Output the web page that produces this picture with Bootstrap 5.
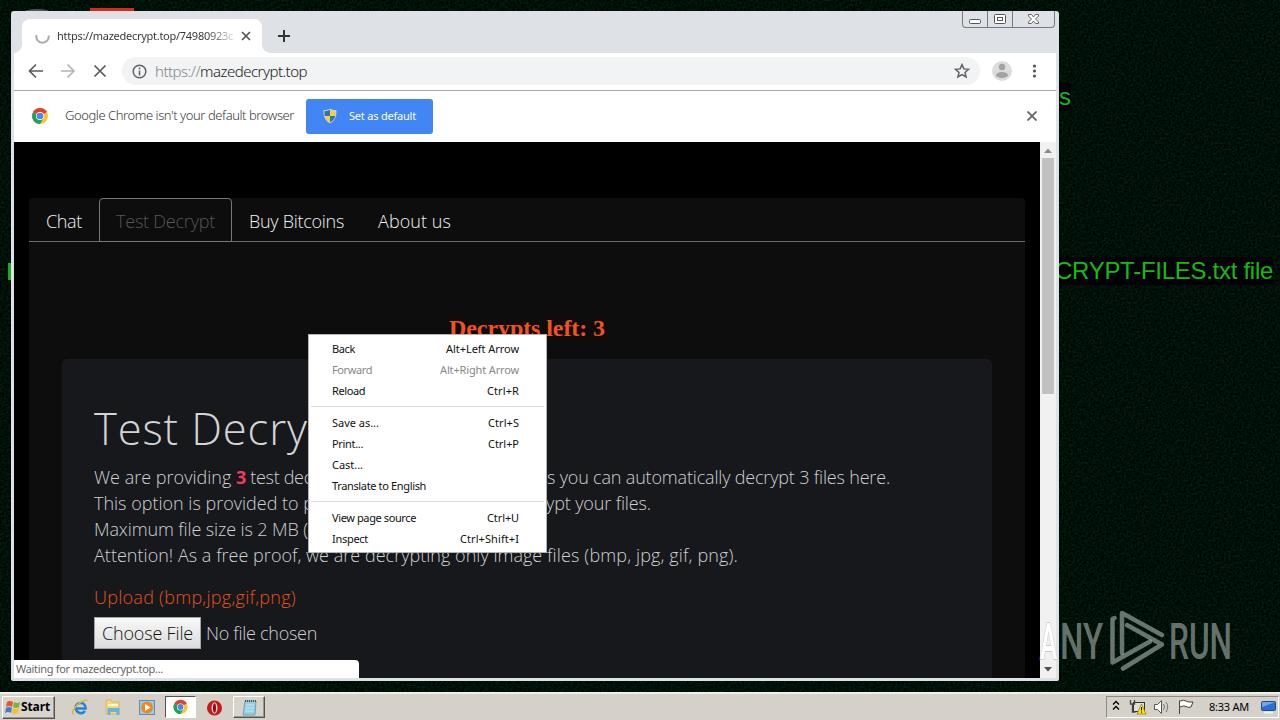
<!DOCTYPE html>
<html lang="en">
<head>
<meta charset="utf-8">
<meta name="viewport" content="width=device-width, initial-scale=1">
<title>Desktop</title>
<link rel="stylesheet" href="https://cdn.jsdelivr.net/npm/bootstrap@5.3.0/dist/css/bootstrap.min.css">
<style>
html,body{height:100%}
body{background:#000f07;font-family:"Open Sans","Noto Sans",sans-serif;width:1280px;height:720px}
svg{display:block;flex:none}
.desk{width:1280px;height:720px}
.wall-text{font:24px/28px "Liberation Sans",sans-serif;color:#12bd12;background:#030006;white-space:nowrap}
.wt-s{left:1030px;top:83px;width:41px;text-align:right}
.wt-r{right:7px;top:257px;width:300px;text-align:right}
.wt-i{left:8px;top:263px;width:3px;height:17px;background:#1fa824}
.bit-red{left:90px;top:8px;width:44px;height:8px;background:#d62a1a}
.bit-gray{left:24px;top:9px;width:26px;height:6px;background:#555;border-radius:50% 50% 0 0}
.win{left:11px;top:11px;width:1048px;height:670px;background:#dee1e6;border-radius:3px 3px 2px 2px;padding:0 3px 3px}
.ui{font-family:"Noto Sans","Open Sans",sans-serif;font-size:11px;line-height:14px;white-space:nowrap}
.strip{height:42px}
.tab-on{width:240px;height:34px;margin:8px 0 0 8px;background:#fff;border-radius:8px 8px 0 0;padding:0 11px 0 13px}
.tab-on::before,.tab-on::after{content:"";position:absolute;bottom:0;width:8px;height:8px}
.tab-on::before{left:-8px;background:radial-gradient(circle at 0 0,transparent 7.5px,#fff 8px)}
.tab-on::after{right:-8px;background:radial-gradient(circle at 100% 0,transparent 7.5px,#fff 8px)}
.tab-title{width:177px;margin-left:7px;overflow:hidden;background:linear-gradient(90deg,#333 150px,#ccc 174px);-webkit-background-clip:text;background-clip:text;color:transparent}
.plus{margin-top:19px}
.caps{width:93px;height:17px;margin-right:1px;border:1px solid #777a80;border-top:0;border-radius:0 0 4px 4px}
.caps div+div{border-left:1px solid #777a80}
.cap-a{width:25px}
.toolbar{height:38px;background:#fff;border-bottom:1px solid #a9a9a9;padding-bottom:1px}
.omni{width:858px;height:28px;border-radius:14px;background:#f1f3f4;margin-left:14px;padding:0 10px}
.url{font-size:15px;line-height:20px;color:#222;font-weight:300}
.url i{font-style:normal;color:#84888c}
.infobar{height:51px;background:#fff;padding-bottom:1px}
.info-t{font-size:13px;line-height:18px;color:#3b3b3b;font-weight:350;padding-bottom:2px}
.btn-def{width:127px;height:35px;margin:1px 0 0 12px;background:#4286f5;border:0;border-radius:3px;color:#fff;padding:0 17px 1px}
.btn-def .ui{margin-left:12px}
.info-x{margin-right:19px}
.view{height:536px;background:#000;overflow:hidden}
.sbar{width:16px;background:#f1f1f1}
.thumb{width:12px;height:236px;background:#c1c1c1;margin:0 2px}
.sb-down{margin-top:267px}
.panel{margin:56px 15px 0;background:#0d0d0d;height:480px;border-radius:4px 4px 0 0}
.tabs{height:44px;border-bottom:1px solid #6a6a6a}
.tabs .nav-link{height:44px;padding:0 16px;color:#f2f2f2;font-size:18px;line-height:44px;font-weight:300;border:1px solid transparent;border-radius:4px 4px 0 0;margin:0}
.tabs .nav-link.active{color:#555;background:transparent;border:1px solid #777}
.left-n{height:33px;margin-top:70px;font:bold 24px/33px "Liberation Serif",serif;color:#f4511e;padding-left:420px;white-space:nowrap}
.jumbo{margin:14px 33px 0;height:330px;background:#16181c;border-radius:5px;padding:43px 32px 0;color:#cfd0d2;font-weight:300}
.jumbo h1{font-size:43.5px;line-height:54px;font-weight:340;margin:0;color:#d3d4d6;white-space:nowrap}
.txt{font-size:18px;line-height:26px;margin-top:8px;white-space:nowrap}
.txt b{color:#f23a5c;font-weight:700}
.up{font-size:18px;line-height:26px;margin-top:16px;color:#e4521b;white-space:nowrap}
.choose{width:107px;height:32px;background:linear-gradient(#f8f8f8,#dcdcdc);border:1px solid #a5a5a5;color:#111;font-size:18px;line-height:29px;font-weight:300;padding:0 7px;border-radius:0}
.filerow{margin-top:7px}
.nofile{font-size:18px;line-height:32px;margin-left:5px}
.status{left:3px;top:649px;width:345px;height:18px;background:#fff;border-radius:0 4px 0 0;color:#666;padding:2px}
.ctx{left:308px;top:334px;width:239px;height:219px;background:#fff;border:1px solid #b5b5b5;padding:3px 1px;color:#111}
.ctx .it{height:21px;line-height:21px;padding:0 26px 0 22px}
.ctx .off{color:#888}
.ctx hr{margin:5px 1px;border:0;height:1px;background:#dcdcdc;opacity:1}
.task{left:0;top:692px;width:1280px;height:28px;background:#d5d0c8;border-top:2px solid #f1efea;color:#000}
.raised{background:#d8d3cc;border:1px solid;border-color:#fff #55524e #55524e #fff;box-shadow:inset -1px -1px #99958f}
.start{width:53px;height:23px;margin-left:2px;font-weight:700;font-size:12px;padding:0 2px}
.sunk{background:#fff;border:1px solid;border-color:#55524e #fff #fff #55524e;width:31px;height:22px}
.note{width:32px;height:22px}
.tray{width:173px;height:22px;border:1px solid;border-color:#8e8a84 #fff #fff #8e8a84;margin-right:1px}
.water{left:1030px;top:600px}
.fit{display:inline-block;white-space:pre}
</style>
</head>
<body class="m-0 overflow-hidden">
<div class="desk position-relative overflow-hidden">
<svg class="position-absolute" width="1280" height="692"><filter id="n" x="0" y="0" width="100%" height="100%" color-interpolation-filters="sRGB"><feTurbulence type="fractalNoise" baseFrequency=".45" numOctaves="2"/><feColorMatrix values="0 0 0 0 0  .24 0 0 0 -.055  .13 0 0 0 -.034  0 0 0 0 1"/></filter><rect width="1280" height="692" filter="url(#n)"/></svg>
<div class="wall-text wt-s position-absolute">s</div>
<div class="wall-text wt-r position-absolute"><span class="fit" data-w="218">CRYPT-FILES.txt file</span></div>
<div class="wt-i position-absolute"></div><div class="bit-red position-absolute"></div><div class="bit-gray position-absolute"></div>

<main class="win position-absolute d-flex flex-column">
  <div class="strip d-flex align-items-start">
    <div class="tab-on position-relative d-flex align-items-center">
      <svg width="15" height="15" fill="none" stroke="#aaa" stroke-width="2"><path d="M1.500 6A6.200 6.200 0 1 0 13.600 6.500"/></svg>
      <div class="tab-title ui"><span class="fit" data-w="176">https://mazedecrypt.top/74980923c</span></div>
      <svg class="ms-2" width="10" height="10" stroke="#555" stroke-width="1.700"><path d="M1 1l8 8M9 1l-8 8"/></svg>
    </div>
    <svg class="ms-3 plus" width="12" height="12" stroke="#333" stroke-width="2"><path d="M6 0v12M0 6h12"/></svg>
    <div class="caps ms-auto d-flex">
      <div class="cap-a"><svg width="24" height="16"><rect x="6.500" y="8.500" width="11" height="4" rx="1" fill="#fff" stroke="#555"/></svg></div>
      <div class="cap-a"><svg width="24" height="16" fill="#fff" stroke="#555"><rect x="6.500" y="3.500" width="11" height="9" rx="1"/><rect x="9.500" y="6.500" width="5" height="3"/></svg></div>
      <div><svg width="41" height="16"><path d="M15.500 3.500h3l2 2.500 2-2.500h3v1.500l-3 3 3 3v1.500h-3l-2-2.500-2 2.500h-3v-1.500l3-3-3-3z" fill="#fff" stroke="#666"/></svg></div>
    </div>
  </div>
  <div class="toolbar d-flex align-items-center">
    <svg width="94" height="36" fill="none" stroke="#5a5a5a" stroke-width="1.700"><path d="M29 18H16M22 11.500L15.500 18l6.500 6.500"/><path stroke="#b5b5b5" d="M47 18h13M53.500 11.500L60 18l-6.500 6.500"/><path d="M80.500 12.500l11 11M91.500 12.500l-11 11"/></svg>
    <div class="omni d-flex align-items-center">
      <svg width="15" height="15" fill="none" stroke="#5f6368" stroke-width="1.500"><circle cx="7.500" cy="7.500" r="6.300"/><path d="M7.500 6.500v5M7.500 3.500v1.700"/></svg>
      <div class="ui url ms-2"><span class="fit" data-w="152"><i>https://</i>mazedecrypt.top</span></div>
      <svg class="ms-auto" width="16" height="16" fill="none" stroke="#5f6368" stroke-width="1.500"><path d="M8 1.600l1.900 4.300 4.700.4-3.600 3.100 1.100 4.600L8 11.600l-4.100 2.400L5 9.400 1.400 6.300l4.700-.4z"/></svg>
    </div>
    <svg width="66" height="36"><circle cx="22" cy="18" r="10" fill="#dcdcdc"/><circle cx="22" cy="14" r="3.200" fill="#a2a2a2"/><ellipse cx="22" cy="22" rx="6" ry="3" fill="#a2a2a2"/><g fill="#555"><circle cx="54.500" cy="13" r="1.600"/><circle cx="54.500" cy="18" r="1.600"/><circle cx="54.500" cy="23" r="1.600"/></g></svg>
  </div>
  <div class="infobar d-flex align-items-center">
    <svg width="51" height="24" viewBox="0 0 51 24"><g id="cr" transform="translate(26 12)"><circle r="8" fill="#fbc52d"/><path d="M0 0L-6.900-4A8 8 0 0 1 7-4z" fill="#de4233"/><path d="M0 0L-6.900-4A8 8 0 0 0 0 8L3.500 2z" fill="#1ea362"/><circle r="4" fill="#fff"/><circle r="3.300" fill="#4a86ee"/></g></svg>
    <div class="ui info-t"><span class="fit" data-w="229">Google Chrome isn't your default browser</span></div>
    <button class="btn btn-def d-flex align-items-center">
      <svg width="14" height="16"><path d="M7 1c2 1.500 4 1.500 6 1.500 0 6-1 9.500-6 12.500C2 12 1 8.500 1 2.500 3 2.500 5 2.500 7 1z" fill="#f6d13a" stroke="#c8d5df"/><path d="M7 1.800V8H1.700Q1.500 6 1.500 3.200 5 3 7 1.800zM7 8h5.300Q11.500 12 7 14.300z" fill="#3670b5"/></svg>
      <span class="ui"><span class="fit" data-w="67">Set as default</span></span>
    </button>
    <svg class="ms-auto info-x" width="10" height="10" stroke="#666" stroke-width="1.800"><path d="M.5.500l9 9M9.500.500l-9 9"/></svg>
  </div>
  <div class="view d-flex">
    <div class="flex-grow-1">
      <div class="panel overflow-hidden">
        <nav class="nav nav-tabs tabs flex-nowrap">
          <a class="nav-link"><span class="fit" data-w="36">Chat</span></a>
          <a class="nav-link active"><span class="fit" data-w="99">Test Decrypt</span></a>
          <a class="nav-link"><span class="fit" data-w="95">Buy Bitcoins</span></a>
          <a class="nav-link"><span class="fit" data-w="73">About us</span></a>
        </nav>
        <div class="left-n"><span class="fit" data-w="156">Decrypts left: 3</span></div>
        <section class="jumbo">
          <h1><span class="fit" data-w="256">Test Decrypt</span></h1>
          <div class="txt">
            <div><span class="fit" data-w="142">We are providing </span><b class="fit" data-w="10">3</b><span class="fit" data-w="301"> test decrypts for our clients, this mean</span><span class="fit" data-w="343">s you can automatically decrypt 3 files here.</span></div>
            <div><span class="fit" data-w="220">This option is provided to p</span><span class="fit" data-w="232">rove that we are able to decr</span><span class="fit" data-w="105">ypt your files.</span></div>
            <div><span class="fit" data-w="214">Maximum file size is 2 MB (</span><span class="fit" data-w="90">megabytes)</span></div>
            <div><span class="fit" data-w="453">Attention! As a free proof, we are decrypting only image </span><span class="fit" data-w="191">files (bmp, jpg, gif, png).</span></div>
          </div>
          <div class="up"><span class="fit" data-w="202">Upload (bmp,jpg,gif,png)</span></div>
          <div class="d-flex filerow"><button class="choose"><span class="fit" data-w="91">Choose File</span></button><span class="nofile"><span class="fit" data-w="111">No file chosen</span></span></div>
        </section>
      </div>
    </div>
    <div class="sbar">
      <svg width="16" height="16"><path d="M4 11l4-4.500 4 4.500z" fill="#8b8b8b"/></svg>
      <div class="thumb"></div>
      <svg class="sb-down" width="16" height="16"><path d="M4 6h8l-4 4.500z" fill="#505050"/></svg>
    </div>
  </div>
  <div class="status ui position-absolute"><span class="fit" data-w="147">Waiting for mazedecrypt.top...</span></div>
</main>

<div class="ctx ui position-absolute" role="menu">
  <div class="it d-flex justify-content-between"><span class="fit" data-w="23">Back</span><span class="fit" data-w="73">Alt+Left Arrow</span></div>
  <div class="it off d-flex justify-content-between"><span class="fit" data-w="40">Forward</span><span class="fit" data-w="79">Alt+Right Arrow</span></div>
  <div class="it d-flex justify-content-between"><span class="fit" data-w="33">Reload</span><span class="fit" data-w="32">Ctrl+R</span></div>
  <hr>
  <div class="it d-flex justify-content-between"><span class="fit" data-w="47">Save as...</span><span class="fit" data-w="31">Ctrl+S</span></div>
  <div class="it d-flex justify-content-between"><span class="fit" data-w="31">Print...</span><span class="fit" data-w="31">Ctrl+P</span></div>
  <div class="it"><span class="fit" data-w="31">Cast...</span></div>
  <div class="it"><span class="fit" data-w="94">Translate to English</span></div>
  <hr>
  <div class="it d-flex justify-content-between"><span class="fit" data-w="84">View page source</span><span class="fit" data-w="32">Ctrl+U</span></div>
  <div class="it d-flex justify-content-between"><span class="fit" data-w="36">Inspect</span><span class="fit" data-w="59">Ctrl+Shift+I</span></div>
</div>

<footer class="task ui position-absolute d-flex align-items-center">
  <div class="start raised d-flex align-items-center">
    <svg width="16" height="16"><path d="M2 3q3-2 6 0L7 8Q4 6 1 8z" fill="#e8552b"/><path d="M9 3q3 2 6 0l-1 5q-3 2-6 0z" fill="#7ab53a"/><path d="M1 9q3-2 6 0l-1 5q-3-2-6 0z" fill="#3f7fd0"/><path d="M8 9q3 2 6 0l-1 5q-3 2-6 0z" fill="#f6c12d"/></svg>
    <span class="fit" data-w="29">Start</span>
  </div>
  <svg width="110" height="24" viewBox="55 0 110 24">
    <g fill="none"><path d="M85.500 13.500h-10A5 5 0 0 1 85.500 12.500zM76 14a5 5 0 0 0 9 2" stroke="#2484d6" stroke-width="2.600"/><path d="M73 19.500C71 14 82 4 87.500 5.500" stroke="#e0b63a" stroke-width="1.600"/></g>
    <path d="M106 5h5l1 2h7v12h-13z" fill="#f3d877" stroke="#cda94a" stroke-width=".6"/><path d="M107.500 20v-7h12v7h-3v-3h-6v3z" fill="#67b5df"/><path d="M108 10h10" stroke="#fff7c8" stroke-width="2"/>
    <rect x="139.500" y="5.500" width="15" height="14" fill="#9cc9ec" stroke="#5a8fbe"/><circle cx="147" cy="12.500" r="6" fill="#ee8a1d"/><path d="M145 9l5.500 3.500-5.500 3.500z" fill="#fff"/>
  </svg>
  <div class="sunk d-flex align-items-center justify-content-center"><svg width="15" height="16" viewBox="18 3 16 18"><use href="#cr"/></svg></div>
  <svg width="37" height="24"><circle cx="18.500" cy="13" r="7.500" fill="#c9171b"/><ellipse cx="18.500" cy="13" rx="3" ry="5.700" fill="#f4d7d3"/><ellipse cx="18.500" cy="13" rx="1.500" ry="4.700" fill="#8b0c10"/></svg>
  <div class="note raised d-flex align-items-center justify-content-center"><svg width="15" height="17"><path d="M3 2h11l-1 14H1z" fill="#93d0e4" stroke="#5b8ba0" stroke-width=".7"/><path d="M3 2h11" stroke="#555" stroke-width="2" stroke-dasharray="1 1"/><path d="M4 6h8M4 9h8M3 12h8" stroke="#c5eaf4"/></svg></div>
  <div class="tray ms-auto d-flex align-items-center">
    <svg width="102" height="22" viewBox="0 0 102 22">
      <path d="M6 8.500l3-3 3 3M6 13.500l3-3 3 3" fill="none" stroke="#000" stroke-width="1.300"/>
      <rect x="26.500" y="6.500" width="11" height="9" fill="#ddd" stroke="#333"/><path d="M23.500 4v4h4V4M25.500 8v8h3" fill="none" stroke="#444" stroke-width="1.300"/><path d="M34.500 8l4.500 10h-9z" fill="#ffe600" stroke="#9a8500" stroke-width=".8"/><path d="M34.500 11v3.500M34.500 15.500v1.200" stroke="#000"/>
      <path d="M47.500 8.500h3l4-4v13l-4-4h-3z" fill="#fff" stroke="#555"/><path d="M56.500 8q2 3 0 6M59 6q3.500 5 0 10" fill="none" stroke="#777"/>
      <path d="M72.500 18V4.500M73 5q4-1.500 6 0t7 1l-2 5q-3 1-5-.5t-6 .5" fill="#fff" stroke="#444"/>
    </svg>
    <span class="fit" data-w="40">8:33 AM</span>
    <svg width="28" height="20"><rect x="12.500" y="4.500" width="14" height="9" rx="1" fill="#2b6fd0" stroke="#234a86"/><path d="M13 5h13L13 10z" fill="#6fa8ee"/><path d="M15 15.500h9" stroke="#f0f0f0" stroke-width="2"/></svg>
  </div>
</footer>

<svg class="water position-absolute" width="220" height="80" viewBox="1030 600 220 80">
  <g font-family="Roboto" font-size="50.500" font-weight="500" fill="#a9b3ae" fill-opacity=".62">
    <text x="1040" y="659" fill="#fff" fill-opacity="1" stroke="#c4c4c4" stroke-width="1.500" paint-order="stroke" textLength="17" lengthAdjust="spacingAndGlyphs">A</text>
    <text x="1060" y="659" textLength="43" lengthAdjust="spacingAndGlyphs">NY</text>
    <text x="1169" y="659" textLength="63" lengthAdjust="spacingAndGlyphs">RUN</text>
  </g>
  <g fill="none" stroke="#a9b3ae" stroke-opacity=".62" stroke-width="4.500" stroke-linejoin="round" stroke-linecap="round"><path d="M1122 653V613L1162 635"/><path d="M1114.500 618L1112.500 619V662.500L1150 641.500"/><path d="M1127 625L1162 644.500 1123 668.500"/></g>
</svg>
</div>
<script src="https://cdn.jsdelivr.net/npm/bootstrap@5.3.0/dist/js/bootstrap.bundle.min.js"></script>
<script>
document.querySelectorAll('.fit').forEach(function (el) {
  var w = parseFloat(el.dataset.w), n = el.textContent.length;
  el.style.letterSpacing = ((w - el.getBoundingClientRect().width) / n) + 'px';
});
</script>
</body>
</html>
